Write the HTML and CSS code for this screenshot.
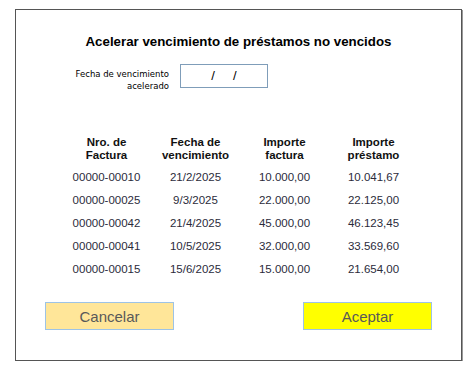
FILE: index.html
```html
<!DOCTYPE html>
<html>
<head>
  <title>Acelerar vencimiento</title>
  <link rel="stylesheet" href="styles.css">
</head>
<body>
<div class="dialog">
  <h1>Acelerar vencimiento de préstamos no vencidos</h1>

  <div class="date-row">
    <label for="fecha">Fecha de vencimiento<br>acelerado</label>
    <div class="date-box" id="fecha">/&nbsp;&nbsp;&nbsp;&nbsp;&nbsp;/</div>
  </div>

  <div class="grid">
    <div class="head">Nro. de<br>Factura</div>
    <div class="head">Fecha de<br>vencimiento</div>
    <div class="head">Importe<br>factura</div>
    <div class="head">Importe<br>préstamo</div>

    <div>00000-00010</div><div>21/2/2025</div><div>10.000,00</div><div>10.041,67</div>
    <div>00000-00025</div><div>9/3/2025</div><div>22.000,00</div><div>22.125,00</div>
    <div>00000-00042</div><div>21/4/2025</div><div>45.000,00</div><div>46.123,45</div>
    <div>00000-00041</div><div>10/5/2025</div><div>32.000,00</div><div>33.569,60</div>
    <div>00000-00015</div><div>15/6/2025</div><div>15.000,00</div><div>21.654,00</div>
  </div>

  <div class="buttons">
    <button class="btn cancel">Cancelar</button>
    <button class="btn ok">Aceptar</button>
  </div>
</div>
</body>
</html>
```

FILE: styles.css
```css
body {
  margin: 0;
  font-family: "Liberation Sans", Arial, sans-serif;
  background: #fff;
}

.dialog {
  margin: 9px 0 0 15px;
  width: 445px;
  height: 350px;
  border: 1px solid #555;
  box-shadow: 1px 1px 0 #999;
}

h1 {
  margin: 24px 0 0 0;
  font-size: 13.3px;
  line-height: 16px;
  text-align: center;
  color: #000;
}

.date-row {
  display: flex;
  align-items: flex-start;
  margin-top: 14px;
  padding-left: 45px;
}

.date-row label {
  width: 108px;
  padding-top: 4px;
  text-align: right;
  font-family: "DejaVu Sans", sans-serif;
  font-size: 8.5px;
  line-height: 12px;
  color: #000;
}

.date-box {
  margin-left: 11px;
  width: 86px;
  height: 22px;
  border: 1px solid #7f9db9;
  font-size: 13px;
  line-height: 22px;
  text-align: center;
  color: #000;
}

.grid {
  display: grid;
  grid-template-columns: repeat(4, 89px);
  grid-template-rows: 30px;
  grid-auto-rows: 23px;
  margin: 44px 0 0 46px;
  font-size: 11.5px;
  color: #2b2b3b;
  text-align: center;
}

.grid div {
  line-height: 23px;
}

.grid .head {
  font-weight: bold;
  color: #111;
  line-height: 13px;
}

.buttons {
  display: flex;
  justify-content: space-between;
  margin: 21px 0 0 29px;
  width: 387px;
}

.btn {
  width: 129px;
  height: 28px;
  border: 1px solid #9dc3e6;
  font-family: "Liberation Sans", Arial, sans-serif;
  font-size: 15px;
  color: #595959;
  padding: 0;
}

.cancel {
  background-color: #ffe699;
}

.ok {
  background-color: #ffff00;
}
```
